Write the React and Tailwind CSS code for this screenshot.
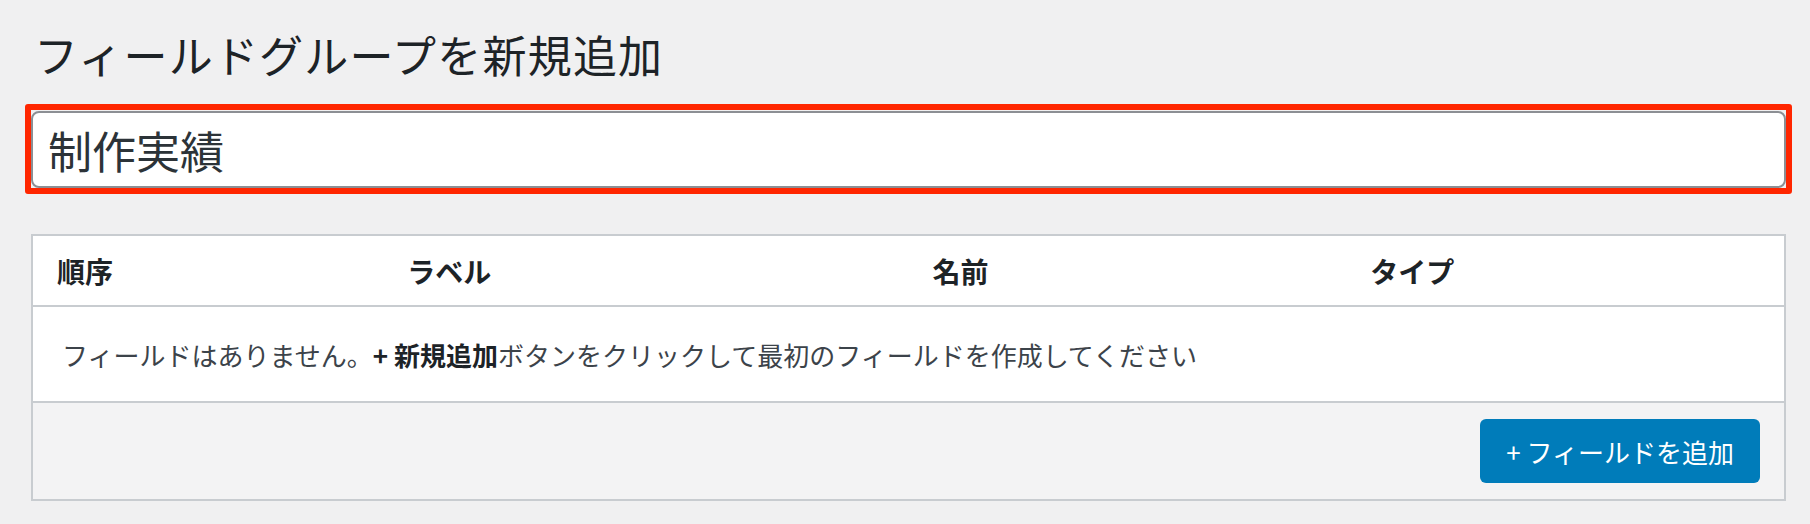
export default function App() {
  const cols = [
    { id: 0, label: "順序", w: "w-[20%]" },
    { id: 1, label: "ラベル", w: "w-[30%]" },
    { id: 2, label: "名前", w: "w-[25%]" },
    { id: 3, label: "タイプ", w: "w-[25%]" },
  ];

  return (
    <div className="min-h-[524px] bg-[#f0f0f1] pl-[31px] pr-[24px] pt-[28px] font-['Noto_Sans_CJK_JP','Noto_Sans',sans-serif] text-[#1d2327]">
      <h1 className="pl-[3px] text-[44px] font-normal leading-[52px] tracking-[1.2px]">
        フィールドグループを新規追加
      </h1>

      {/* title input, marked with a red frame */}
      <div className="relative mt-[31px]">
        <div className="pointer-events-none absolute -inset-[6px] -top-[7px] rounded-[3px] border-[6px] border-[#ff2600]" />
        <input
          readOnly
          value="制作実績"
          className="block h-[77px] w-full rounded-[8px] border-2 border-[#8c8f94] bg-white px-[15px] text-[44px] text-[#2c3338] outline-none font-['Noto_Sans_CJK_JP',sans-serif]"
        />
      </div>

      {/* field list */}
      <div className="mt-[46px] border-2 border-[#c8ccd0] bg-white">
        <div className="flex h-[71px] items-center border-b-2 border-[#c8ccd0]">
          {cols.map((c) => (
            <div key={c.id} className={`${c.w} pl-[24px] text-[28px] font-bold`}>
              {c.label}
            </div>
          ))}
        </div>
        <div className="flex h-[96px] items-center border-b-2 border-[#c8ccd0] pl-[29px] text-[26px] text-[#3c434a]">
          <span>
            フィールドはありません。<strong className="font-bold text-[#1d2327]">+ 新規追加</strong>ボタンをクリックして最初のフィールドを作成してください
          </span>
        </div>
        <div className="flex h-[96px] items-center justify-end bg-[#f3f3f4] pr-[24px]">
          <button className="h-[64px] rounded-[6px] bg-[#007cba] px-[26px] text-[26px] text-white">
            + フィールドを追加
          </button>
        </div>
      </div>
    </div>
  );
}
